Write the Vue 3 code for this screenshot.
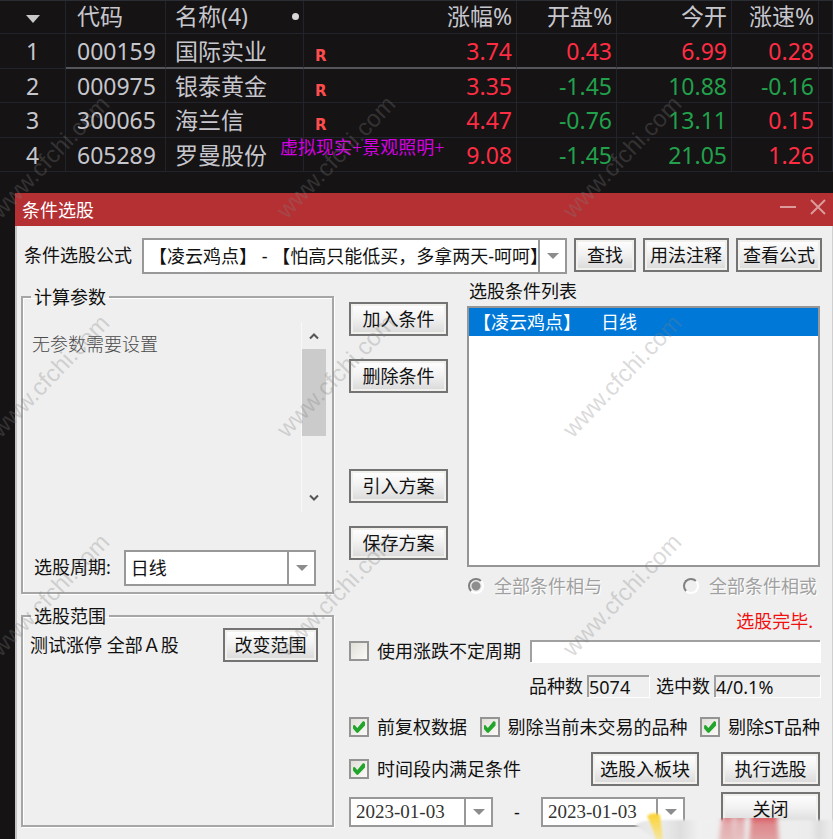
<template>
  <div class="screen">
    <table class="quotes">
      <colgroup>
        <col class="c-index" /><col class="c-code" /><col class="c-name" /><col class="c-change" />
        <col class="c-open" /><col class="c-today" /><col class="c-speed" /><col class="c-rest" />
      </colgroup>
      <thead>
        <tr>
          <th class="center">
            <svg class="sort" width="14" height="8" viewBox="0 0 14 8"><path d="M0 0h14L7 8z" fill="#c8c8c8" /></svg>
          </th>
          <th class="code">代码</th>
          <th class="name"><div class="split"><span>名称(4)</span><i class="dot"></i></div></th>
          <th class="num">涨幅%</th>
          <th class="num">开盘%</th>
          <th class="num">今开</th>
          <th class="num">涨速%</th>
          <th></th>
        </tr>
      </thead>
      <tbody>
        <tr v-for="(s, i) in stocks" :key="s.code" :class="{ current: i === 0 }">
          <td class="center">{{ i + 1 }}</td>
          <td class="code">{{ s.code }}</td>
          <td class="name">{{ s.name }}</td>
          <td class="num">
            <div class="split">
              <b class="flag">{{ s.flag }}</b>
              <span v-if="s.topic" class="topic">{{ s.topic }}</span>
              <span class="up">{{ s.change }}</span>
            </div>
          </td>
          <td class="num" :class="tone(s.open)">{{ s.open }}</td>
          <td class="num" :class="tone(s.open)">{{ s.today }}</td>
          <td class="num" :class="tone(s.speed)">{{ s.speed }}</td>
          <td></td>
        </tr>
      </tbody>
    </table>

    <section class="dialog">
      <header class="titlebar">
        <span>条件选股</span>
        <div class="win-btns">
          <button type="button" aria-label="最小化">
            <svg width="16" height="16" viewBox="0 0 16 16"><path d="M0 8h16" /></svg>
          </button>
          <button type="button" aria-label="关闭窗口">
            <svg width="16" height="16" viewBox="0 0 16 16"><path d="M1 1l14 14M15 1L1 15" /></svg>
          </button>
        </div>
      </header>

      <div class="body">
        <div class="formula-row">
          <label for="formula">条件选股公式</label>
          <div class="combo grow">
            <select id="formula" v-model="formula">
              <option>{{ formula }}</option>
            </select>
            <span class="arrow"></span>
          </div>
          <button type="button" class="btn find">查找</button>
          <button type="button" class="btn wide">用法注释</button>
          <button type="button" class="btn wide">查看公式</button>
        </div>

        <div class="columns">
          <div class="left">
            <fieldset class="group">
              <legend>计算参数</legend>
              <div class="params">
                <p>无参数需要设置</p>
                <div class="scroll">
                  <svg width="10" height="8" viewBox="0 0 10 8"><path d="M1 6.5l4-4 4 4" /></svg>
                  <div class="thumb"></div>
                  <svg width="10" height="8" viewBox="0 0 10 8"><path d="M1 1.5l4 4 4-4" /></svg>
                </div>
              </div>
              <div class="period">
                <label for="period">选股周期:</label>
                <div class="combo grow">
                  <select id="period" v-model="period">
                    <option>日线</option>
                  </select>
                  <span class="arrow"></span>
                </div>
              </div>
            </fieldset>

            <fieldset class="group range">
              <legend>选股范围</legend>
              <div class="range-row">
                <span>测试涨停 全部Ａ股</span>
                <button type="button" class="btn">改变范围</button>
              </div>
            </fieldset>
          </div>

          <div class="right">
            <div class="conditions">
              <div class="actions">
                <button type="button" class="btn">加入条件</button>
                <button type="button" class="btn">删除条件</button>
                <button type="button" class="btn scheme">引入方案</button>
                <button type="button" class="btn">保存方案</button>
              </div>
              <div class="list-col">
                <span id="list-title" class="list-title">选股条件列表</span>
                <ul class="list" aria-labelledby="list-title">
                  <li><span>【凌云鸡点】</span><span>日线</span></li>
                </ul>
                <div class="radios">
                  <label><input type="radio" name="join" value="and" v-model="join" disabled />全部条件相与</label>
                  <label><input type="radio" name="join" value="or" v-model="join" disabled />全部条件相或</label>
                </div>
              </div>
            </div>

            <p class="done">选股完毕.</p>

            <div class="line">
              <label class="check"><input type="checkbox" v-model="opts.floating" />使用涨跌不定周期</label>
              <input class="sunken white grow" type="text" aria-label="不定周期" />
            </div>

            <div class="line counts">
              <label for="total">品种数</label>
              <input id="total" class="sunken total" type="text" value="5074" readonly />
              <label for="hit">选中数</label>
              <input id="hit" class="sunken hit" type="text" value="4/0.1%" readonly />
            </div>

            <div class="line checks">
              <label class="check"><input type="checkbox" v-model="opts.adjusted" />前复权数据</label>
              <label class="check"><input type="checkbox" v-model="opts.skipIdle" />剔除当前未交易的品种</label>
              <label class="check"><input type="checkbox" v-model="opts.skipSt" />剔除ST品种</label>
            </div>

            <div class="line run">
              <label class="check grow"><input type="checkbox" v-model="opts.inSpan" />时间段内满足条件</label>
              <button type="button" class="btn board">选股入板块</button>
              <button type="button" class="btn">执行选股</button>
            </div>

            <div class="line dates">
              <div class="combo date">
                <select v-model="from" aria-label="开始日期"><option>2023-01-03</option></select>
                <span class="arrow"></span>
              </div>
              <span class="dash">-</span>
              <div class="combo date">
                <select v-model="to" aria-label="结束日期"><option>2023-01-03</option></select>
                <span class="arrow"></span>
              </div>
              <button type="button" class="btn close">关闭</button>
            </div>
          </div>
        </div>
      </div>
    </section>

    <svg class="smudge" width="200" height="30" viewBox="0 0 200 30">
      <defs>
        <linearGradient id="haze" x1="0" y1="0" x2="1" y2="0">
          <stop offset="0" stop-color="#e4e4e4" />
          <stop offset="0.12" stop-color="#ededed" />
          <stop offset="0.23" stop-color="#dedede" />
          <stop offset="0.32" stop-color="#f0f0f0" />
          <stop offset="0.88" stop-color="#ececec" />
          <stop offset="0.93" stop-color="#dedede" />
          <stop offset="1" stop-color="#eeeeee" />
        </linearGradient>
        <linearGradient id="rose" x1="0" y1="0" x2="0" y2="1">
          <stop offset="0" stop-color="#d9535a" />
          <stop offset="0.3" stop-color="#dc7f82" />
          <stop offset="1" stop-color="#e0989a" />
        </linearGradient>
        <linearGradient id="gold" x1="0" y1="0" x2="0" y2="1">
          <stop offset="0" stop-color="#fbd332" />
          <stop offset="1" stop-color="#f5e6a4" />
        </linearGradient>
        <filter id="soft"><feGaussianBlur stdDeviation="1" /></filter>
        <filter id="softer" x="-0.2" width="1.4"><feGaussianBlur stdDeviation="2 0.5" /></filter>
      </defs>
      <path d="M2 15Q8 10 26 10H200V30H22Q12 22 2 15Z" fill="url(#haze)" filter="url(#soft)" />
      <path d="M14 6Q20 1 27 5L30 30H23Q19 16 14 6Z" fill="url(#gold)" filter="url(#soft)" />
      <g fill="url(#rose)" filter="url(#softer)">
        <path d="M89 8h11v22h-14z" opacity="0.6" />
        <path d="M102 8h10v22h-12z" opacity="0.5" />
        <path d="M118 8h26l2 22h-30z" opacity="0.9" />
      </g>
    </svg>

    <svg class="marks" aria-hidden="true">
      <g v-for="m in marks" :key="m.x + '-' + m.y" :transform="`translate(${m.x} ${m.y}) rotate(-46)`">
        <text text-anchor="middle" y="8">www.cfchi.com</text>
      </g>
    </svg>
  </div>
</template>

<script setup>
import { ref, reactive } from 'vue';

const stocks = [
  { code: '000159', name: '国际实业', flag: 'R', change: '3.74', open: '0.43', today: '6.99', speed: '0.28' },
  { code: '000975', name: '银泰黄金', flag: 'R', change: '3.35', open: '-1.45', today: '10.88', speed: '-0.16' },
  { code: '300065', name: '海兰信', flag: 'R', change: '4.47', open: '-0.76', today: '13.11', speed: '0.15' },
  { code: '605289', name: '罗曼股份', flag: '', topic: '虚拟现实+景观照明+', change: '9.08', open: '-1.45', today: '21.05', speed: '1.26' }
];

// 红涨绿跌
const tone = (v) => (v.startsWith('-') ? 'down' : 'up');

const formula = ref('【凌云鸡点】 - 【怕高只能低买，多拿两天-呵呵】');
const period = ref('日线');
const join = ref('and');
const from = ref('2023-01-03');
const to = ref('2023-01-03');
const opts = reactive({ floating: false, adjusted: true, skipIdle: true, skipSt: true, inSpan: true });

const marks = [157, 376, 595].flatMap((y) => [50, 336, 622].map((x) => ({ x, y })));
</script>

<style>
body { margin: 0; background: #151314; }
</style>

<style scoped>
.screen {
  position: relative;
  min-height: 100vh;
  display: flex;
  flex-direction: column;
  overflow: hidden;
  background: #151314;
  font-family: "Noto Sans", "Noto Sans CJK SC", sans-serif;
}

/* 行情表 */
.quotes {
  width: 100%;
  table-layout: fixed;
  border-collapse: separate;
  border-spacing: 0;
  border-top: 1px solid #2b2d34;
  color: #c6c6cc;
  font-size: 23px;
  line-height: 30px;
}
.c-index { width: 66px; }
.c-code { width: 100px; }
.c-name { width: 138px; }
.c-change { width: 213px; }
.c-open { width: 100px; }
.c-today { width: 115px; }
.c-speed { width: 87px; }
.c-rest { width: 14px; }

.quotes th, .quotes td {
  box-sizing: border-box;
  height: 34px;
  padding: 0 4px;
  font-weight: 400;
  text-align: left;
  white-space: nowrap;
  border-right: 1px solid #21242c;
  border-bottom: 1px solid #21242c;
}
.quotes th { height: 33px; padding-bottom: 2px; }
.quotes tr:nth-child(odd) td { height: 35px; }
.quotes .center { text-align: center; }
.quotes .code { padding-left: 11px; }
.quotes .name { padding-left: 9px; }
.quotes .num { text-align: right; }
.quotes .current td:not(.center) { border-bottom: 2px solid #55565b; }
.sort { display: inline-block; vertical-align: middle; }
.split { position: relative; display: flex; align-items: center; justify-content: space-between; }
.dot { width: 7px; height: 7px; border-radius: 50%; background: #d8d8d8; }
.flag {
  padding: 10px 0 0 7px;
  color: #ff4d4d;
  font-family: "DejaVu Sans", sans-serif;
  font-size: 15px;
  line-height: 16px;
}
.topic {
  position: absolute;
  left: -28px;
  top: -7px;
  color: #d400e0;
  font-family: "Liberation Serif", "Noto Sans CJK SC", serif;
  font-size: 18px;
}
.up { color: #ff2d43; }
.down { color: #22a04b; }

/* 对话框 */
.dialog {
  flex: 1;
  margin: 21px 0 0 15px;
  background: #efefef;
  color: #111;
  font-size: 18px;
  line-height: 24px;
}
.titlebar {
  display: flex;
  justify-content: space-between;
  align-items: center;
  height: 33px;
  padding: 0 7px;
  background: #b43033;
  color: #fff;
}
.win-btns { display: flex; gap: 14px; padding-bottom: 5px; }
.win-btns button { display: flex; padding: 0; border: 0; background: none; }
.win-btns path { stroke: #dc9a9b; stroke-width: 2; fill: none; }

.body {
  padding: 12px 10px 13px 4px;
  border-left: 2px solid #c4c4c4;
  border-right: 1px solid #cfcfcf;
}
.formula-row { display: flex; gap: 7px; padding-left: 3px; }
.formula-row label { padding-right: 3px; line-height: 34px; }
.grow { flex: 1; min-width: 0; }

.btn {
  box-sizing: border-box;
  height: 34px;
  padding: 0;
  border: 2px solid #747474;
  background: linear-gradient(#fff, #f2f2f2 45%, #d9d9d9);
  box-shadow: inset 0 0 0 2px #f1f0ec;
  color: #111;
  font: inherit;
  line-height: 28px;
  white-space: nowrap;
}
.find { width: 62px; }
.wide { width: 86px; }

.combo {
  position: relative;
  box-sizing: border-box;
  height: 36px;
  border: 2px solid #989898;
  background: #fff;
}
.combo select {
  appearance: none;
  width: 100%;
  height: 100%;
  padding: 0 27px 0 5px;
  border: 0;
  border-radius: 0;
  background: transparent;
  color: #111;
  font: inherit;
}
.combo .arrow {
  position: absolute;
  top: 0;
  right: 0;
  bottom: 0;
  display: flex;
  align-items: center;
  justify-content: center;
  width: 25px;
  border-left: 2px solid #989898;
  background: #fff;
  pointer-events: none;
}
.arrow::before {
  content: '';
  border: 6px solid transparent;
  border-top-color: #8c8c8c;
  border-bottom: 0;
}

.columns { display: flex; gap: 15px; padding: 7px 2px 0 0; }
.left { flex: 0 0 313px; display: flex; flex-direction: column; gap: 10px; padding-top: 4px; }
.right { flex: 1; min-width: 0; }

.group {
  margin: 0;
  padding: 0 6px 0 8px;
  min-width: 0;
  border: 2px solid #a6a6a6;
  box-shadow: 1px 1px 0 #fff, inset 1px 1px 0 #fff;
}
.group legend { padding: 0 3px; }
.params { display: flex; justify-content: space-between; padding-top: 13px; height: 190px; }
.params p {
  margin: 10px 0 0 1px;
  color: #4a4a4a;
  font-weight: 300;
}
.scroll {
  display: flex;
  flex-direction: column;
  align-items: center;
  box-sizing: border-box;
  width: 25px;
  padding: 10px 0;
  border-left: 1px solid #f8f8f8;
}
.scroll path { fill: none; stroke: #555; stroke-width: 2; }
.thumb { width: 100%; height: 87px; margin: 9px 0 auto; background: #cbcbcb; }
.period { display: flex; gap: 13px; padding: 38px 10px 6px 3px; }
.period label { line-height: 34px; }

.range { flex: 1; }
.range-row {
  display: flex;
  justify-content: space-between;
  align-items: center;
  margin-left: -1px;
  padding-right: 8px;
}
.range-row .btn { width: 95px; }

.conditions { display: flex; gap: 19px; }
.actions { display: flex; flex-direction: column; gap: 23px; width: 99px; padding-top: 21px; }
.actions .scheme { margin-top: 53px; }
.list-col { flex: 1; min-width: 0; }
.list-title { display: block; padding: 0 2px 5px; line-height: 20px; }
.list {
  box-sizing: border-box;
  height: 261px;
  margin: 0;
  padding: 0;
  list-style: none;
  border: 2px solid #969696;
  background: #fff;
}
.list li { display: flex; gap: 20px; padding: 1px 4px; line-height: 26px; background: #0078d7; color: #fff; }
.radios { display: flex; justify-content: space-between; padding: 7px 3px 0 0; }
.radios label { display: flex; align-items: center; gap: 10px; color: #a0a0a0; text-shadow: 1px 1px 0 #fff; }
.radios input {
  appearance: none;
  box-sizing: border-box;
  width: 16px;
  height: 16px;
  margin: 0 0 0 1px;
  border: 2px solid;
  border-color: #808080 #fff #fff #808080;
  border-radius: 50%;
}
.radios input:checked { background: radial-gradient(circle, #8e8e8e 4px, transparent 5px); }

.done { margin: 0; padding: 11px 7px 6px; text-align: right; color: #f01010; }

.line { display: flex; align-items: center; gap: 9px; }
.check { display: flex; align-items: center; gap: 8px; white-space: nowrap; }
.check input {
  appearance: none;
  display: grid;
  place-items: center;
  box-sizing: border-box;
  width: 20px;
  height: 20px;
  margin: 0;
  border: 2px solid #949494;
  background: linear-gradient(135deg, #e2dfd8, #fbfaf8);
}
.check input:checked::before {
  content: '';
  width: 12px;
  height: 12px;
  background: #22a52b;
  clip-path: polygon(0 38%, 14% 34%, 36% 58%, 84% 0, 100% 8%, 100% 38%, 40% 100%, 28% 96%, 0 62%);
}
.sunken {
  box-sizing: border-box;
  height: 22px;
  padding: 0;
  border: 0 solid #a0a0a0;
  border-width: 2px 0 0 2px;
  background: transparent;
  box-shadow: 1px 1px 0 #fff;
  color: #111;
  font: inherit;
  line-height: 20px;
}
.white { background: #fff; }
.counts { justify-content: flex-end; gap: 4px; padding-top: 11px; }
.total { width: 62px; margin-right: 3px; }
.hit { width: 106px; }
.checks { justify-content: space-between; padding-top: 17px; }
.run { gap: 22px; padding-top: 13px; }
.run .btn { width: 99px; }
.run .board { width: 108px; }
.dates { gap: 0; padding-top: 6px; align-items: flex-start; }
.date { width: 144px; height: 30px; margin-top: 5px; font-family: "Liberation Serif", serif; font-size: 19px; }
.date select { color: #333; }
.dash { width: 48px; padding-top: 8px; text-align: center; }
.close { width: 99px; margin-left: auto; }

/* 覆盖层 */
.smudge { position: absolute; right: 0; bottom: 0; pointer-events: none; }
.marks { position: absolute; inset: 0; width: 100%; height: 100%; pointer-events: none; }
.marks text {
  fill: rgba(128, 128, 128, 0.3);
  font-family: "Liberation Sans", sans-serif;
  font-size: 24px;
}
</style>
